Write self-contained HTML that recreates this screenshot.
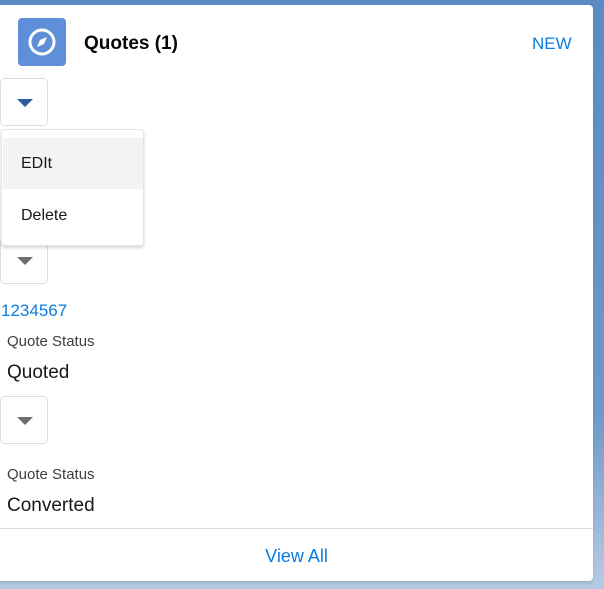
<!DOCTYPE html>
<html><head><style>
body{margin:0;width:604px;height:589px;background:linear-gradient(#5b8bc2,#6d98c8 70%,#b3c8e2 98%);font-family:"Liberation Sans",sans-serif;position:relative;overflow:hidden}
.card{position:absolute;left:0;top:5px;width:593px;height:576px;background:#fff;border-radius:0 4px 4px 0;box-shadow:0 2px 2px rgba(0,0,0,.12)}
.a{position:absolute}
.btn{position:absolute;left:0;width:46px;height:46px;border:1px solid #d8dde6;border-radius:5px;background:#fff}
.tri{position:absolute;left:16px;top:20px;width:0;height:0;border-left:8px solid transparent;border-right:8px solid transparent;border-top:8px solid #706e6b}
</style></head><body>
<div class="card">
<div class="a" style="left:18px;top:13px;width:48px;height:48px;background:#5f8fd9;border-radius:4px">
<svg width="48" height="48" viewBox="0 0 48 48"><circle cx="24" cy="24" r="12" fill="none" stroke="#fff" stroke-width="3"/><path d="M29 19 L26 26 L19 29 L22 22 Z" fill="#fff"/></svg></div>
<div class="a" style="left:84px;top:28px;font-size:19px;font-weight:bold;color:#080707">Quotes (1)</div>
<div class="a" style="left:532px;top:29px;font-size:17px;color:#0b7de0">NEW</div>
<div class="btn" style="top:73px"><div class="tri" style="border-top-color:#2e5b9e"></div></div>
<div class="btn" style="top:231px"><div class="tri"></div></div>
<div class="a" style="left:1px;top:296px;font-size:17px;color:#0b7de0">1234567</div>
<div class="a" style="left:7px;top:328px;font-size:15px;color:#3e3e3c">Quote Status</div>
<div class="a" style="left:7px;top:357px;font-size:19px;color:#181818">Quoted</div>
<div class="btn" style="top:391px"><div class="tri"></div></div>
<div class="a" style="left:7px;top:461px;font-size:15px;color:#3e3e3c">Quote Status</div>
<div class="a" style="left:7px;top:490px;font-size:19px;color:#181818">Converted</div>
<div class="a" style="left:0;top:523px;width:593px;border-top:1px solid #dddbda"></div>
<div class="a" style="left:0;top:541px;width:593px;text-align:center;font-size:18px;color:#0b7de0">View All</div>
<div class="a" style="left:1px;top:124px;width:141px;height:115px;background:#fff;border:1px solid #e5e5e5;border-radius:4px;box-shadow:0 2px 3px rgba(0,0,0,.16)">
<div class="a" style="left:1px;top:8px;width:140px;height:51px;background:#f3f3f3"></div>
<div class="a" style="left:19px;top:25px;font-size:16px;color:#181818">EDIt</div>
<div class="a" style="left:19px;top:77px;font-size:16px;color:#181818">Delete</div>
</div>
</div>
</body></html>
